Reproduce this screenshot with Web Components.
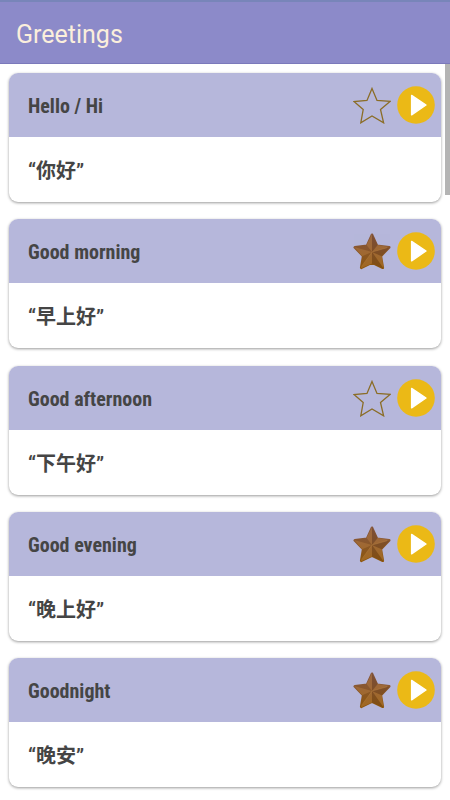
<!DOCTYPE html>
<html lang="en">
<head>
<meta charset="utf-8">
<meta name="viewport" content="width=device-width, initial-scale=1">
<title>Greetings</title>
<style>
body { margin: 0; background: #fff; font-family: Roboto, "Noto Sans CJK SC", sans-serif; }
</style>
</head>
<body>
<phrase-screen>
  <app-bar slot="bar">Greetings</app-bar>
  <phrase-card><span slot="title">Hello / Hi</span>“你好”</phrase-card>
  <phrase-card starred><span slot="title">Good morning</span>“早上好”</phrase-card>
  <phrase-card><span slot="title">Good afternoon</span>“下午好”</phrase-card>
  <phrase-card starred><span slot="title">Good evening</span>“晚上好”</phrase-card>
  <phrase-card starred><span slot="title">Goodnight</span>“晚安”</phrase-card>
</phrase-screen>
<script>
function define(name, html, setup) {
  const template = document.createElement('template');
  template.innerHTML = html;
  customElements.define(name, class extends HTMLElement {
    constructor() {
      super();
      this.attachShadow({ mode: 'open' }).append(template.content.cloneNode(true));
    }
    connectedCallback() { if (setup) setup(this, this.shadowRoot); }
  });
}

define('star-icon', `
<style>
  :host { display: block; width: 38px; height: 38px; }
  svg { display: block; width: 100%; height: 100%; }
  .full, :host([filled]) .empty { display: none; }
  :host([filled]) .full { display: inline; }
</style>
<svg viewBox="0 0 38 38" aria-hidden="true">
  <defs>
    <linearGradient id="base" x1="0" y1="0" x2="0" y2="1">
      <stop offset="0" stop-color="#85583f"/><stop offset=".4" stop-color="#89572f"/><stop offset="1" stop-color="#8d560c"/>
    </linearGradient>
  </defs>
  <path class="empty" fill="none" stroke="#8b6d27" stroke-width="1.3" stroke-linejoin="miter"
    d="M19 2.4 L24 14.4 L37 15.4 L27.5 23.4 L30.6 36.8 L19 29.9 L7.8 36.8 L10.2 23.6 L1 15.6 L14 14.4Z"/>
  <g class="full">
    <path fill="url(#base)" stroke="url(#base)" stroke-width="2.6" stroke-linejoin="round"
      d="M19 2.8 L24 13.8 L36.2 15.4 L27.8 24 L29.8 35.8 L19 30.6 L8.2 35.8 L10.2 24 L1.8 15.4 L14 13.8Z"/>
    <g fill="#c68a48" opacity=".35">
      <path d="M19 2 L19 20 L13.6 13Z"/>
      <path d="M24.6 13 L37 15 L19 20Z"/>
      <path d="M28.8 24.2 L30.6 36.4 L19 20Z"/>
      <path d="M19 31.6 L7.4 36.4 L19 20Z"/>
      <path d="M9.2 24.2 L1.2 15 L19 20Z"/>
    </g>
    <g fill="#5b3420" opacity=".22">
      <path d="M19 2 L24.6 13 L19 20Z"/>
      <path d="M37 15 L28.8 24.2 L19 20Z"/>
      <path d="M30.6 36.4 L19 31.6 L19 20Z"/>
    </g>
    <path fill="none" stroke="#c48b4b" stroke-width=".7" opacity=".5" d="M19 20 L34 15.8 M19 20 L8.5 34.5"/>
  </g>
</svg>`);

define('play-icon', `
<style>
  :host { display: block; width: 38px; height: 38px; }
  svg { display: block; width: 100%; height: 100%; }
</style>
<svg viewBox="0 0 38 38" aria-hidden="true">
  <circle cx="19" cy="19" r="18.8" fill="#ebb916"/>
  <path d="M14.6 9.4 L29 19 L14.6 28.8Z" fill="#fff" stroke="#fff" stroke-width="1.4" stroke-linejoin="round"/>
</svg>`);

define('app-bar', `
<style>
  :host { display: flex; align-items: center; box-sizing: border-box; min-height: 64px; padding: 4px 16px 0;
    background: #8c8ac9; border-top: 2px solid #7885b9; border-bottom: 1px solid #7b79bb; color: #fbefdc; }
  h1 { margin: 0; font-size: 25px; line-height: 32px; font-weight: 400; }
</style>
<h1><slot></slot></h1>`);

define('phrase-card', `
<style>
  :host { display: block; border-radius: 9px; overflow: hidden; background: #fff; color: #454545;
    box-shadow: 0 1px 3px rgba(0,0,0,.4); }
  header { display: flex; align-items: center; gap: 6px; box-sizing: border-box; min-height: 64px;
    padding: 0 6px 0 19px; background: #b6b7db; }
  h2 { flex: 1; margin: 0; padding-top: 2px; font: 700 20px/24px "Roboto Condensed", "Liberation Sans Narrow", Roboto, sans-serif; }
  button { flex: none; padding: 0; border: 0; background: none; color: inherit; cursor: pointer; border-radius: 50%; }
  p { margin: 0; padding: 19px 19px 16px; font-size: 20px; line-height: 30px; font-weight: 700; }
</style>
<header>
  <h2><slot name="title"></slot></h2>
  <button type="button" class="star" aria-label="Favourite"><star-icon></star-icon></button>
  <button type="button" aria-label="Play"><play-icon></play-icon></button>
</header>
<p lang="zh-Hans"><slot></slot></p>`, (host, root) => {
  const star = root.querySelector('.star');
  const sync = () => {
    const on = host.hasAttribute('starred');
    root.querySelector('star-icon').toggleAttribute('filled', on);
    star.setAttribute('aria-pressed', on);
  };
  star.onclick = () => { host.toggleAttribute('starred'); sync(); };
  sync();
});

define('phrase-screen', `
<style>
  :host { display: flex; flex-direction: column; min-height: 100vh; position: relative; }
  main { flex: 1; display: flex; flex-direction: column; justify-content: space-between; gap: 16px; padding: 9px 9px 13px; }
  .thumb { position: absolute; top: 64px; right: 0; width: 5px; height: 131px; background: #b4b4b4; }
</style>
<slot name="bar"></slot>
<main><slot></slot></main>
<div class="thumb" aria-hidden="true"></div>`);
</script>
</body>
</html>
